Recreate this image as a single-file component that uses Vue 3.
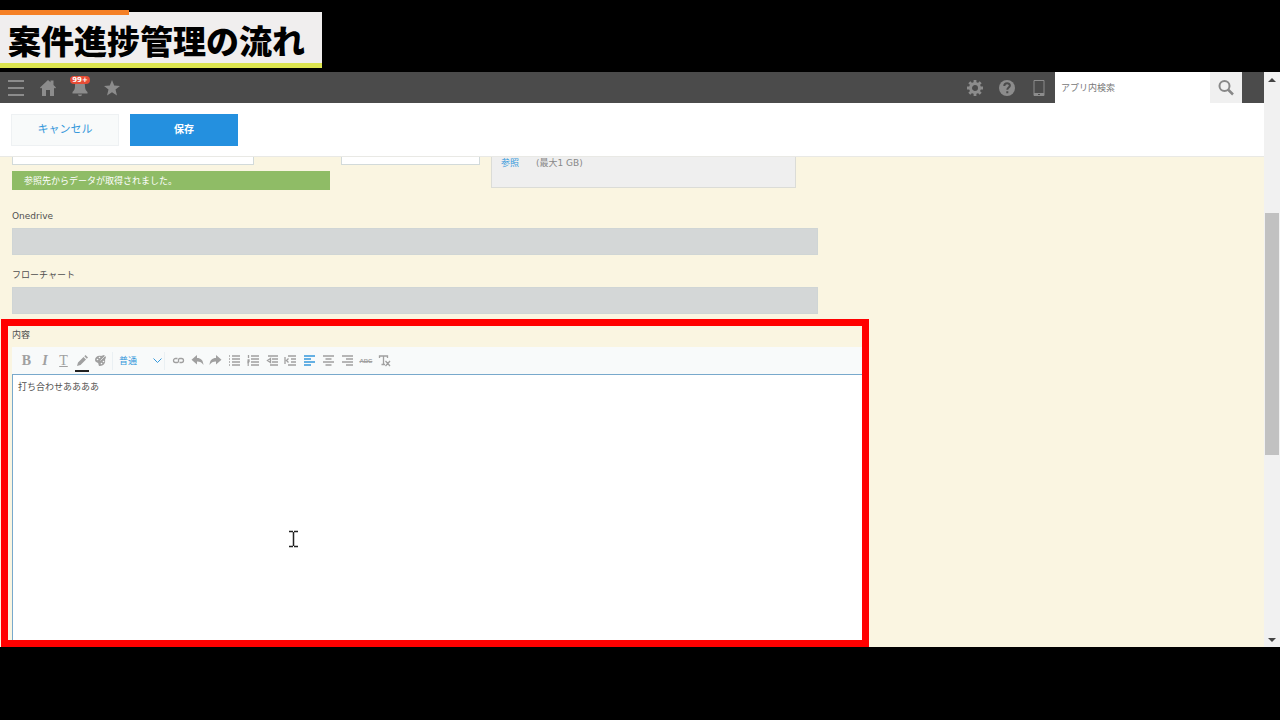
<script setup>
import { ref } from 'vue'

const content = ref('打ち合わせああああ')
const subject = ref('')
const code = ref('')
const onedrive = ref('')
const flowchart = ref('')
const keyword = ref('')
const size = ref('普通')

const marks = ['太字', '斜体', '下線', '文字色', '背景色']
const tools = [
  { name: 'リンク', path: 'M5.500 4.500H3.500a2 2 0 0 0 0 4H5a1.500 1.500 0 0 0 1.500-2M7.500 8.500h2a2 2 0 0 0 0-4H8a1.500 1.500 0 0 0-1.500 2' },
  { name: '元に戻す', fill: true, path: 'M6 1v3c4 0 6 2 6.500 7C11 8.500 9 7.500 6 7.500v3L.5 5.800z' },
  { name: 'やり直す', fill: true, path: 'M7 1v3C3 4 1 6 .5 11 2 8.500 4 7.500 7 7.500v3l5.500-4.700z' },
  { name: '箇条書き', path: 'M1 2h1M4 2h8M1 5h1M4 5h8M1 8h1M4 8h8M1 11h1M4 11h8' },
  { name: '番号付きリスト', path: 'M1.500 1v3M4 2h8M4 5h8M.5 6h1.500v1.500H1V9h1M4 8h8M4 11h8M.5 11h1.500' },
  { name: 'インデント解除', path: 'M2 2h10M6 5h6M6 8h6M4 11h8M4.500 4.500l-3 2 3 2z' },
  { name: 'インデント', path: 'M1 3v7M4 2h8M7 5h5M7 8h5M4 11h8M4.500 4.500l-2 2 2 2' },
  { name: '左揃え', active: true, path: 'M1 2h11M1 5h7M1 8h11M1 11h7' },
  { name: '中央揃え', path: 'M1 2h11M3.500 5h6M1 8h11M3.500 11h6' },
  { name: '右揃え', path: 'M1 2h11M5 5h7M1 8h11M5 11h7' },
  { name: '取り消し線', strike: true },
  { name: '書式をクリア', path: 'M1.500 4V2h8v2M5.500 2v8.500M3.500 10.500h3.500M7.500 7l4.500 5M12 7l-4.500 5' },
]
</script>

<template>
  <div class="stage">
    <h1 class="banner">案件進捗管理の流れ</h1>

    <div class="window">
      <div class="page">
        <header class="topbar">
          <nav class="icons">
            <button type="button" aria-label="メニュー">
              <svg width="18" height="18" viewBox="0 0 18 18"><path d="M1 2h16M1 9h16M1 16h16" fill="none" stroke="currentColor" stroke-width="2" /></svg>
            </button>
            <button type="button" aria-label="ホーム">
              <svg width="18" height="18" viewBox="0 0 18 18"><path d="M9 1l2.500 2.300V1.500h3V6L17 8.500l-1 1-1-.8V17h-4v-6H7v6H3V8.700l-1 .8-1-1z" fill="currentColor" /></svg>
            </button>
            <button type="button" aria-label="通知" class="bell">
              <svg width="18" height="18" viewBox="0 0 18 18"><path d="M9 1c3.500 0 5 2.500 5 6 0 3 .7 4.500 2.500 6v1.500h-15V13C3.300 11.500 4 10 4 7c0-3.500 1.500-6 5-6zM7 15.500h4c0 2.300-4 2.300-4 0z" fill="currentColor" /></svg>
              <span class="badge">99+</span>
            </button>
            <button type="button" aria-label="お気に入り">
              <svg width="18" height="18" viewBox="0 0 18 18"><path d="M9 1l2.200 5.500 5.800.4-4.500 3.700L14 16.500 9 13.300 4 16.500l1.500-5.900L1 6.900l5.800-.4z" fill="currentColor" /></svg>
            </button>
          </nav>
          <div class="icons right">
            <button type="button" aria-label="設定">
              <svg width="18" height="18" viewBox="0 0 18 18">
                <path d="M9 1v16M1 9h16M3.300 3.300l11.400 11.400M14.700 3.300L3.300 14.700" stroke="currentColor" stroke-width="2.800" />
                <circle cx="9" cy="9" r="4.500" fill="#4b4b4b" stroke="currentColor" stroke-width="3" />
              </svg>
            </button>
            <button type="button" aria-label="ヘルプ">
              <svg width="18" height="18" viewBox="0 0 18 18">
                <circle cx="9" cy="9" r="8" fill="currentColor" />
                <path d="M6.300 7c0-3.600 5.600-3.400 5.600-.4 0 2-2.600 2-2.600 4.200M9.300 12.200v2" fill="none" stroke="#4b4b4b" stroke-width="2" />
              </svg>
            </button>
            <button type="button" aria-label="モバイル">
              <svg width="18" height="18" viewBox="0 0 18 18">
                <path d="M4 1.500h10v15H4z" fill="none" stroke="currentColor" />
                <path d="M4 14h10v3H4z" fill="currentColor" /><path d="M8 15.500h2" stroke="#4b4b4b" />
              </svg>
            </button>
          </div>
          <form class="search" @submit.prevent>
            <input v-model="keyword" type="text" aria-label="アプリ内検索" placeholder="アプリ内検索" />
            <button type="submit" aria-label="検索">
              <svg width="18" height="18" viewBox="0 0 18 18"><g fill="none" stroke="currentColor"><circle cx="7.500" cy="7" r="5" stroke-width="2" /><path d="M11 10.500l5 5" stroke-width="2.500" /></g></svg>
            </button>
          </form>
        </header>

        <div class="actions">
          <button type="button" class="cancel">キャンセル</button>
          <button type="button" class="save">保存</button>
        </div>

        <main class="record">
          <div class="row">
            <div class="lookup">
              <input v-model="subject" type="text" aria-label="参照先" />
              <p>参照先からデータが取得されました。</p>
            </div>
            <input v-model="code" class="code" type="text" aria-label="コード" />
            <div class="attach"><a href="#">参照</a><span>(最大1 GB)</span></div>
          </div>

          <div class="field">
            <label for="onedrive">Onedrive</label>
            <input id="onedrive" v-model="onedrive" type="text" disabled />
          </div>
          <div class="field">
            <label for="flowchart">フローチャート</label>
            <input id="flowchart" v-model="flowchart" type="text" disabled />
          </div>

          <section class="editor">
            <label for="content">内容</label>
            <div class="toolbar">
              <div class="marks">
                <button v-for="(m, i) in marks" :key="m" type="button" :aria-label="m" :class="{ color: i === 3 }">
                  <b v-if="i === 0">B</b>
                  <i v-else-if="i === 1">I</i>
                  <u v-else-if="i === 2">T</u>
                  <svg v-else-if="i === 3" width="13" height="13" viewBox="0 0 13 13"><path d="M1 12l1-3.500L7.500 3 10 5.500 4.500 11zM8.300 2.200L9.500 1 12 3.500l-1.200 1.200z" fill="currentColor" /></svg>
                  <svg v-else width="13" height="13" viewBox="0 0 13 13">
                    <path d="M1 6c0-3 3-5 6-4l3-1 2 2-1 3c1 3-2 6-5 6-2 0-1-2-2-3S1 8 1 6z" fill="currentColor" />
                    <g fill="#f8fafa"><circle cx="3.500" cy="5.500" r=".8" /><circle cx="5.500" cy="3.500" r=".8" /><circle cx="7.500" cy="9.500" r=".8" /><circle cx="9.500" cy="7.500" r=".8" /></g>
                    <path d="M11 2L6.500 6.500" stroke="#f8fafa" stroke-width=".7" />
                  </svg>
                </button>
              </div>
              <div class="size">
                <select v-model="size" aria-label="文字サイズ"><option>普通</option></select>
                <svg width="9" height="6" viewBox="0 0 9 6"><path d="M.5 .5l4 4 4-4" fill="none" stroke="currentColor" /></svg>
              </div>
              <div class="tools">
                <button v-for="t in tools" :key="t.name" type="button" :aria-label="t.name" :class="{ active: t.active }">
                  <s v-if="t.strike">ABC</s>
                  <svg v-else width="13" height="13" viewBox="0 0 13 13">
                    <path :d="t.path" :fill="t.fill ? 'currentColor' : 'none'" :stroke="t.fill ? 'none' : 'currentColor'" stroke-width="1.300" />
                  </svg>
                </button>
              </div>
            </div>
            <textarea id="content" v-model="content"></textarea>
          </section>
        </main>
      </div>

      <div class="scrollbar" aria-hidden="true">
        <span class="arrow up"></span>
        <div class="track"><div class="thumb"></div></div>
        <span class="arrow down"></span>
      </div>
    </div>

    <svg class="pointer" width="11" height="18" viewBox="0 0 11 18" aria-hidden="true">
      <path d="M1 1.500h4M6 1.500h4M1 16.500h4M6 16.500h4M5.500 2v14" fill="none" stroke="#222" stroke-width="1.500" />
    </svg>
  </div>
</template>

<style>
body { background: #000; }
</style>

<style scoped>
.stage, .stage * { box-sizing: border-box; }
.stage {
  position: relative;
  display: flex;
  flex-direction: column;
  min-height: 100vh;
  padding: 12px 0 73px;
  background: #000;
  font: 9px/16px "DejaVu Sans", "Noto Sans CJK JP", sans-serif;
  color: #505050;
}
button, input, textarea, select { font: inherit; color: inherit; margin: 0; padding: 0; border: 0; border-radius: 0; background: none; }
button { display: flex; align-items: center; justify-content: center; }

.banner {
  position: relative;
  align-self: flex-start;
  margin: 0 0 4px;
  padding: 5px 17px 0 8px;
  border-bottom: 5px solid #dce450;
  background: #f0eeee;
  color: #000;
  font: 900 33px/46px "Noto Sans CJK JP", sans-serif;
}
.banner::before { content: ""; position: absolute; left: 0; top: -2px; width: 129px; height: 5px; background: #f58025; }

.window { flex: 1; display: flex; min-height: 0; background: #faf5e1; }
.page { flex: 1; min-width: 0; display: flex; flex-direction: column; }

.topbar { display: flex; height: 31px; padding-right: 22px; background: #4b4b4b; color: #8c8c8c; }
.icons { display: flex; }
.icons button { width: 32px; height: 31px; }
.right { margin-left: auto; }
.bell { position: relative; }
.badge { position: absolute; left: 6px; top: 4px; width: 20px; border-radius: 4px; background: #e74c35; color: #fff; font-size: 7px; font-weight: 700; line-height: 8px; text-align: center; }
.search { display: flex; }
.search input { width: 155px; padding: 0 6px; background: #fff; }
.search input::placeholder { color: #777; opacity: 1; }
.search button { width: 32px; background: #f0f0f0; color: #888; }

.actions { display: flex; gap: 11px; height: 54px; padding: 11px; border-bottom: 1px solid #e9e9e5; background: #fff; font-size: 11px; }
.actions button { width: 108px; height: 32px; border: 1px solid #eef1f3; }
.cancel { background: #f8fafa; color: #3498db; }
.actions .save { border-color: #2490df; background: #2490df; color: #fff; font-size: 10px; font-weight: 700; }

.record { flex: 1; display: flex; flex-direction: column; min-height: 0; }
.row { display: flex; align-items: flex-start; gap: 11px; padding-left: 12px; }
.lookup { width: 318px; }
.lookup input { display: block; width: 242px; }
.lookup input, .code { height: 8px; border: solid #d2dada; border-width: 0 1px 1px; background: #fff; }
.code { width: 139px; }
.lookup p { margin: 6px 0 0; padding: 2px 12px 1px; background: #8fbc66; color: #fff; }
.attach { display: flex; gap: 17px; width: 305px; height: 31px; padding: 0 9px; border: solid #dbdcd7; border-width: 0 1px 1px; background: #efefef; color: #888; line-height: 13px; }
.attach a { color: #3498db; text-decoration: none; }

.field { padding-left: 12px; margin-top: 17px; }
.field + .field { margin-top: 11px; }
.field label { display: block; line-height: 18px; }
.field input { display: block; width: 806px; height: 27px; margin-top: 3px; border: 1px solid #cfd5d5; background: #d4d7d7; }

.editor { flex: 1; display: flex; flex-direction: column; width: 868px; margin: 5px 0 0 1px; border: 7px solid #f00; }
.editor label { padding: 1px 0 4px 4px; line-height: 16px; }
.toolbar { display: flex; align-items: center; height: 27px; margin-left: 4px; padding-left: 5px; background: #f8fafa; color: #a0a0a0; }
.marks { display: grid; grid-template-columns: repeat(5, 1fr); width: 93px; }
.tools { display: grid; grid-template-columns: repeat(12, 1fr); width: 225px; margin-left: 4px; }
.marks button, .tools button { height: 20px; }
.marks b, .marks i, .marks u { font-family: "Liberation Serif", serif; font-size: 14px; font-weight: 700; line-height: 20px; }
.marks u { font-weight: 400; }
.marks .color { position: relative; }
.marks .color::after { content: ""; position: absolute; left: 2px; right: 2px; bottom: -1px; height: 2px; background: #222; }
.size { display: flex; align-items: center; width: 53px; margin-left: 2px; padding: 0 2px 0 6px; border: solid #eaf0f3; border-width: 0 1px; color: #3498db; }
.size select { appearance: none; flex: 1; min-width: 0; height: 18px; }
.tools .active { color: #3498db; }
.tools s { font: 700 6px/12px "Liberation Sans", sans-serif; }
.editor textarea { flex: 1; min-height: 0; margin-left: 4px; padding: 4px 5px; border: solid #78a9cc; border-width: 1px 0 0 1px; background: #fff; resize: none; outline: 0; }

.scrollbar { display: flex; flex-direction: column; align-items: center; width: 16px; padding: 6px 0 5px; background: #f1f1f1; }
.arrow { border: solid transparent; border-width: 0 4px; }
.up { border-bottom: 4px solid #444; }
.down { border-top: 4px solid #444; }
.track { flex: 1; width: 14px; display: flex; flex-direction: column; }
.track::before { content: ""; flex: 131; }
.track::after { content: ""; flex: 183; }
.thumb { flex: 242; background: #c1c1c1; }

.pointer { position: absolute; left: 288px; top: 530px; }
</style>
